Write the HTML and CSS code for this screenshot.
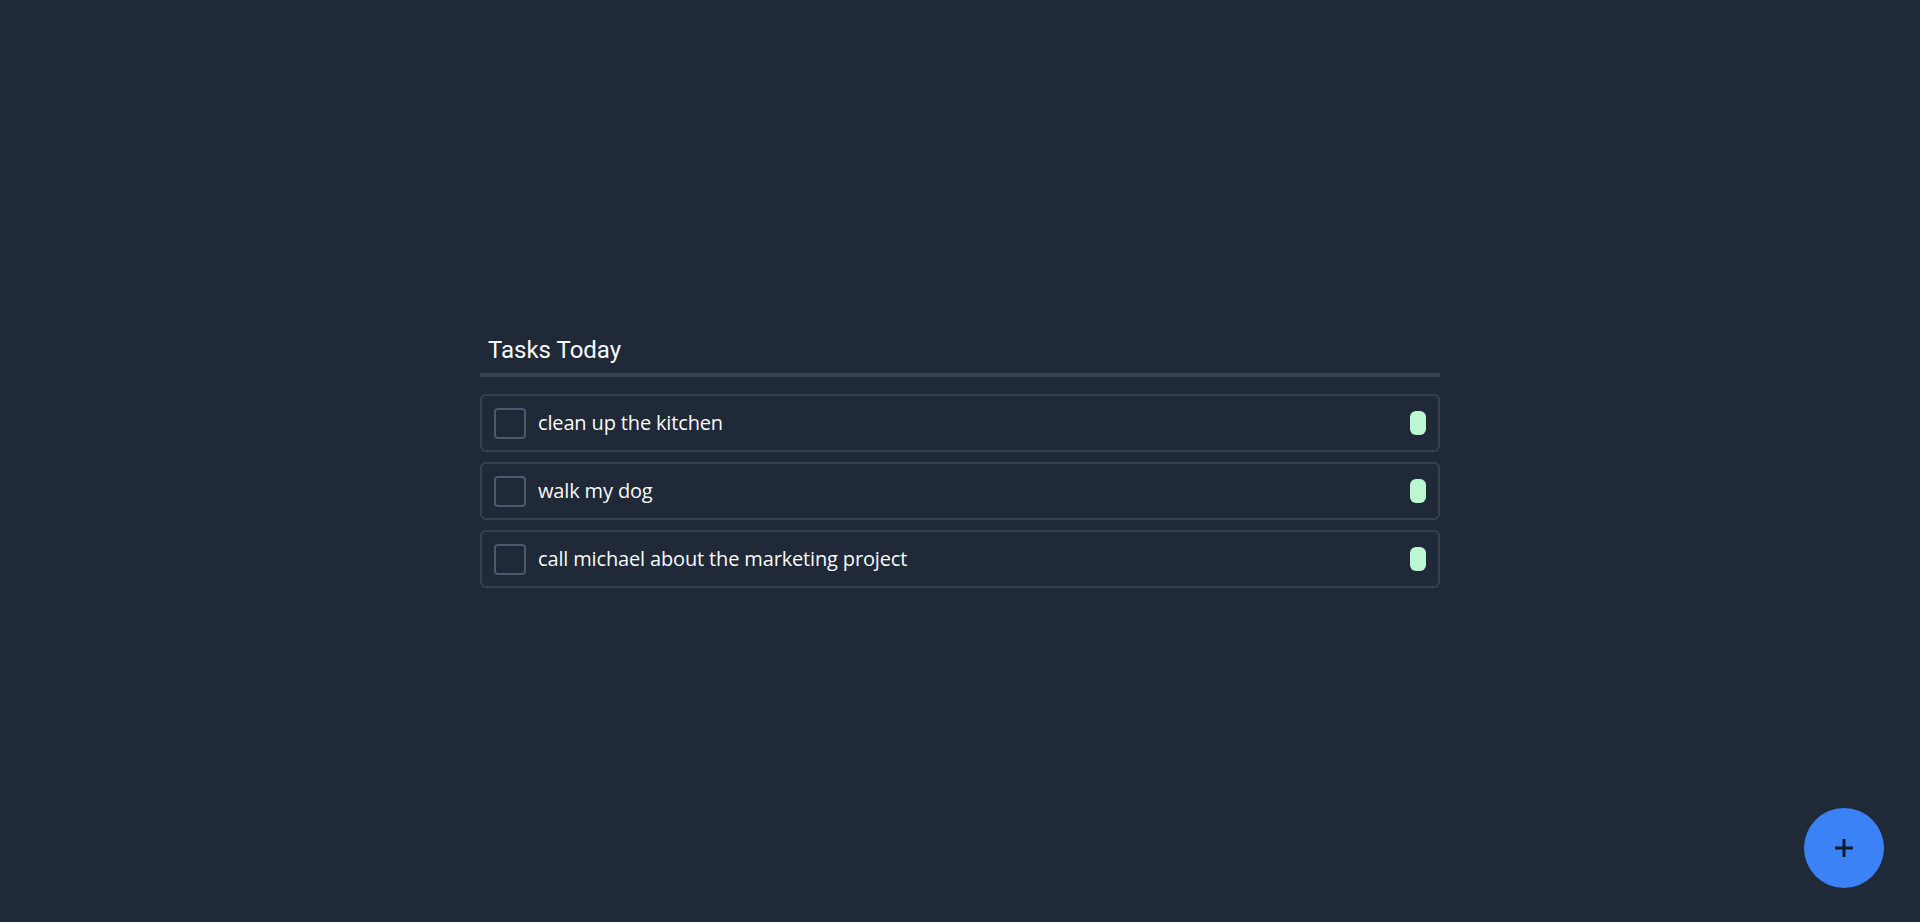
FILE: index.html
```html
<!DOCTYPE html>
<html lang="en">
<head>
<meta charset="utf-8">
<title>Tasks Today</title>
<link rel="stylesheet" href="styles.css">
</head>
<body>
<main class="page">
  <section class="tasks">
    <h1 class="tasks-title">Tasks Today</h1>
    <ul class="task-list">
      <li class="task">
        <span class="checkbox"></span>
        <span class="task-text">clean up the kitchen</span>
        <span class="tag"></span>
      </li>
      <li class="task">
        <span class="checkbox"></span>
        <span class="task-text">walk my dog</span>
        <span class="tag"></span>
      </li>
      <li class="task">
        <span class="checkbox"></span>
        <span class="task-text">call michael about the marketing project</span>
        <span class="tag"></span>
      </li>
    </ul>
  </section>
</main>
<button class="fab" aria-label="Add task">
  <svg width="20" height="20" viewBox="0 0 20 20"><path d="M10 1v18M1 10h18" stroke="#111827" stroke-width="3" fill="none"/></svg>
</button>
</body>
</html>
```
FILE: styles.css
```css
* { box-sizing: border-box; }
html, body { margin: 0; height: 100%; }
body {
  background: #1f2937;
  color: #f9fafb;
  font-family: "Open Sans", "Noto Sans", sans-serif;
}
.page {
  height: 100%;
  display: flex;
  align-items: center;
  justify-content: center;
}
.tasks { width: 960px; }
.tasks-title {
  margin: 0;
  font-family: Roboto, "Liberation Sans", sans-serif;
  font-weight: 400;
  font-size: 24px;
  line-height: 32px;
  padding: 0 8px 7px;
  border-bottom: 4px solid #374151;
}
.task-list {
  list-style: none;
  margin: 17px 0 0;
  padding: 0;
  display: flex;
  flex-direction: column;
  gap: 10px;
}
.task {
  height: 58px;
  display: flex;
  align-items: center;
  gap: 12px;
  padding: 0 12px;
  border: 2px solid #374151;
  border-radius: 6px;
}
.checkbox {
  width: 32px;
  height: 31px;
  border: 2px solid #4b5a6e;
  border-radius: 4px;
  flex: none;
}
.task-text {
  flex: 1;
  font-size: 20px;
  letter-spacing: -0.15px;
  line-height: 28px;
}
.tag {
  width: 16px;
  height: 24px;
  border-radius: 6px;
  background: #bbf7d0;
  flex: none;
}
.fab {
  position: fixed;
  right: 36px;
  bottom: 34px;
  width: 80px;
  height: 80px;
  border-radius: 50%;
  border: none;
  background: #3b82f6;
  display: flex;
  align-items: center;
  justify-content: center;
  padding: 0;
}
```
